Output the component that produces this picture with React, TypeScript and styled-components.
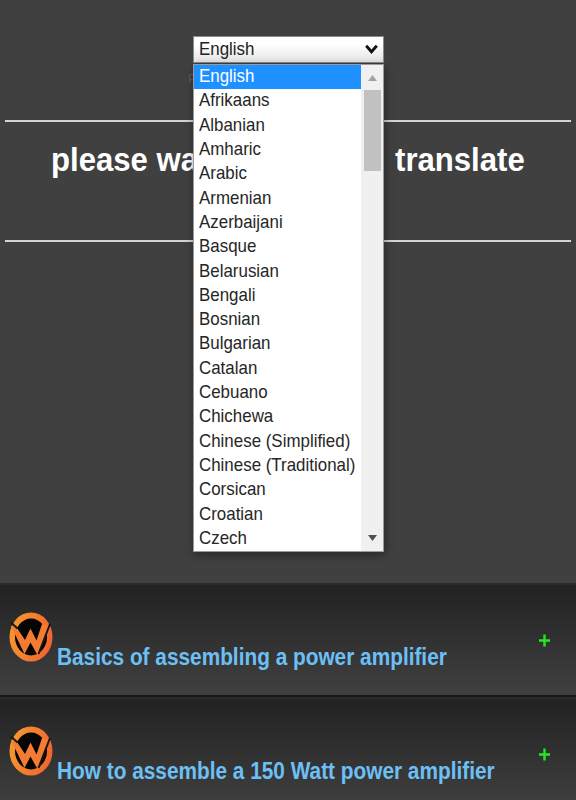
import React from "react";
import { styled, createGlobalStyle } from "styled-components";

const languages = [
  "English",
  "Afrikaans",
  "Albanian",
  "Amharic",
  "Arabic",
  "Armenian",
  "Azerbaijani",
  "Basque",
  "Belarusian",
  "Bengali",
  "Bosnian",
  "Bulgarian",
  "Catalan",
  "Cebuano",
  "Chichewa",
  "Chinese (Simplified)",
  "Chinese (Traditional)",
  "Corsican",
  "Croatian",
  "Czech",
];

const articles = ["Basics of assembling a power amplifier", "How to assemble a 150 Watt power amplifier"];

const GlobalStyle = createGlobalStyle`
  * {
    box-sizing: border-box;
  }
  body {
    margin: 0;
    background: #404040;
    font-family: "Liberation Sans", Arial, sans-serif;
  }
`;

const Page = styled.div`
  display: flex;
  flex-direction: column;
  height: 800px;
  overflow: hidden;
`;

const TranslateArea = styled.section`
  display: flex;
  flex: none;
  flex-direction: column;
  height: 583px;
  padding: 36px 5px 0;
`;

const SelectWrap = styled.div`
  position: relative;
  width: 191px;
  height: 27px;
  margin-left: 188px;
`;

const SelectBox = styled.div`
  display: flex;
  align-items: center;
  justify-content: space-between;
  height: 27px;
  padding: 0 5px 2px;
  border: 1px solid #8a8a8a;
  background: linear-gradient(#fff 30%, #e4e4e4);
  color: #222;
`;

const Condensed = styled.span<{ $scale: number }>`
  display: inline-block;
  white-space: nowrap;
  transform: scaleX(${({ $scale }) => $scale});
  transform-origin: left center;
`;

const SelectText = styled(Condensed)`
  font-size: 19px;
  line-height: 24px;
`;

const Popup = styled.div`
  position: absolute;
  z-index: 2;
  top: 28px;
  left: 0;
  display: flex;
  width: 191px;
  height: 488px;
  border: 1px solid #9a9a9a;
  background: #fff;
  box-shadow: 1px 3px 9px rgba(0, 0, 0, 0.4);
`;

const Options = styled.ul`
  flex: 1;
  min-width: 0;
  margin: 0;
  padding: 0;
  list-style: none;
`;

const Option = styled.li<{ $active: boolean }>`
  height: 24.32px;
  padding-left: 5px;
  background: ${({ $active }) => ($active ? "#1e90ff" : "transparent")};
  color: ${({ $active }) => ($active ? "#fff" : "#262626")};
  font-size: 19px;
  line-height: 22px;
`;

const Scrollbar = styled.div`
  display: flex;
  flex: none;
  flex-direction: column;
  align-items: center;
  width: 22px;
  padding: 10px 0;
  background: #f0f0f0;
`;

const Thumb = styled.div`
  width: 17px;
  height: 81px;
  margin: 9px 0 auto;
  background: #c1c1c1;
`;

const PoweredBy = styled.div`
  height: 18px;
  margin: 7px 0 0 183px;
  color: #5c5c5c;
  font-size: 13px;
  line-height: 18px;
`;

const Rule = styled.hr`
  width: 566px;
  height: 2px;
  margin: 0;
  border: 0;
  background: #d4d4d4;
`;

const TopRule = styled(Rule)`
  margin-top: 32px;
`;

const Heading = styled.h1`
  display: flex;
  justify-content: space-between;
  height: 118px;
  margin: 0;
  padding: 18px 46px 0 46px;
  color: #fff;
  font-size: 34px;
  line-height: 39px;
`;

const HeadingEnd = styled(Condensed)`
  transform-origin: right center;
`;

const Panel = styled.div`
  display: flex;
  flex: none;
  height: 114px;
  padding: 27px 0 0 9px;
  border-top: 2px solid #2b2b2b;
  border-bottom: 2px solid #171717;
  background: linear-gradient(#222, #404040);
`;

const PanelTitle = styled.h2`
  flex: 1;
  min-width: 0;
  margin: 32px 0 0 4px;
  color: #6cc0f5;
  font-size: 23px;
  line-height: 26px;
`;

const Plus = styled.svg`
  flex: none;
  width: 11px;
  height: 13px;
  margin: 22px 26px 0 0;
`;

const LogoSvg = styled.svg`
  flex: none;
  width: 44px;
  height: 50px;
`;

const Logo = () => (
  <LogoSvg viewBox="0 0 44 50">
    <defs>
      <linearGradient id="flame" x1="0" x2="1" y1="0.2" y2="0.5">
        <stop offset="0" stopColor="#f59a30" />
        <stop offset="1" stopColor="#f0652d" />
      </linearGradient>
    </defs>
    <ellipse cx="22" cy="25" rx="21.5" ry="24.5" fill="url(#flame)" />
    <ellipse cx="22" cy="25" rx="16" ry="18.5" fill="#050505" />
    <path d="M2 14 L8 16 L16 28 L21.5 16.5 L27.5 28.5 L33 12 L40 14 L28.5 43 L21.5 30.5 L15.5 42 Z" fill="#f47c32" />
    <path d="M2 10.5 L8.5 16.5 M41 12 L29.5 42" fill="none" stroke="#191512" strokeWidth="2" />
  </LogoSvg>
);

const App: React.FC = () => (
  <>
    <GlobalStyle />
    <Page>
      <TranslateArea>
        <SelectWrap>
          <SelectBox>
            <SelectText $scale={0.89}>English</SelectText>
            <svg width="13" height="10" viewBox="0 0 13 10">
              <path d="M1.2 1.8 L6.5 7.8 L11.8 1.8" fill="none" stroke="#111" strokeWidth="2.8" />
            </svg>
          </SelectBox>
          <Popup>
            <Options>
              {languages.map((language, i) => (
                <Option key={language} $active={i === 0}>
                  <Condensed $scale={0.89}>{language}</Condensed>
                </Option>
              ))}
            </Options>
            <Scrollbar>
              <svg width="9" height="6" viewBox="0 0 9 6">
                <path d="M0 6 L4.5 0 L9 6 Z" fill="#a3a3a3" />
              </svg>
              <Thumb />
              <svg width="9" height="6" viewBox="0 0 9 6">
                <path d="M0 0 L9 0 L4.5 6 Z" fill="#505050" />
              </svg>
            </Scrollbar>
          </Popup>
        </SelectWrap>
        <PoweredBy>P</PoweredBy>
        <TopRule />
        <Heading>
          <Condensed $scale={0.915}>please wa</Condensed>
          <HeadingEnd $scale={0.915}>translate</HeadingEnd>
        </Heading>
        <Rule />
      </TranslateArea>
      {articles.map((title) => (
        <Panel key={title}>
          <Logo />
          <PanelTitle>
            <Condensed $scale={0.905}>{title}</Condensed>
          </PanelTitle>
          <Plus viewBox="0 0 11 13">
            <path d="M5.5 0.5 V12.5 M0 6.5 H11" stroke="#25e625" strokeWidth="2.4" />
          </Plus>
        </Panel>
      ))}
    </Page>
  </>
);

export default App;
